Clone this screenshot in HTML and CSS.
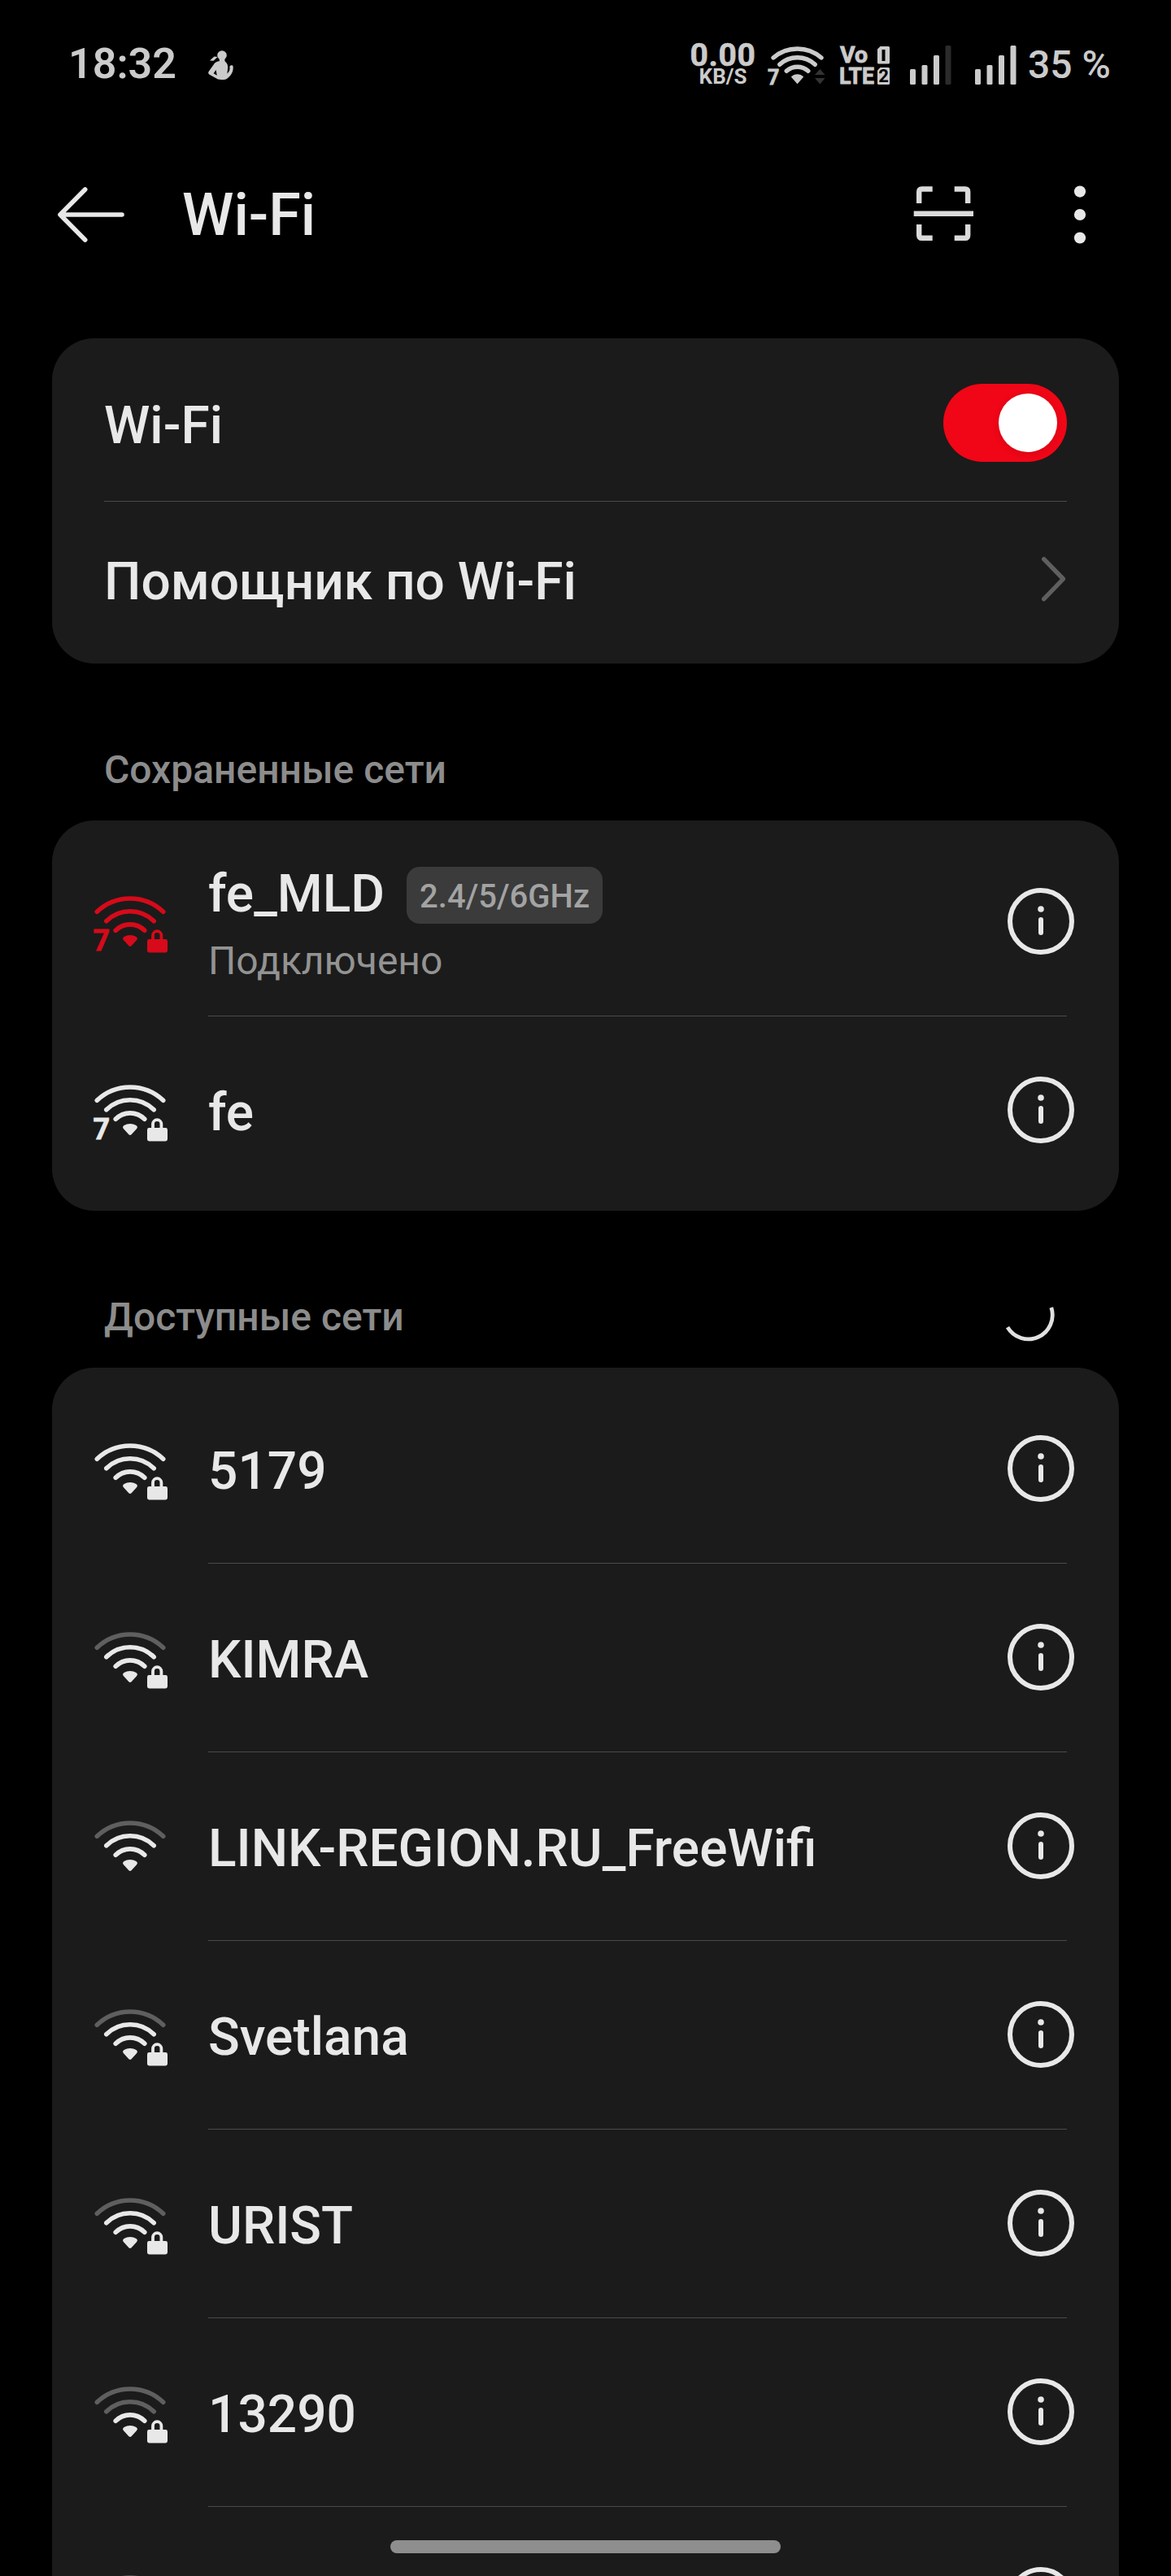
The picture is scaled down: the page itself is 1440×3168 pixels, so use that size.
FILE: index.html
```
<!DOCTYPE html>
<html lang="ru">
	<head>
		<meta charset="UTF-8">
		<title>Wi-Fi</title>
		<meta name="viewport" content="width=device-width, initial-scale=1">
		<link rel="stylesheet" href="styles.css">
	</head>
	<body>
		<svg class="sprite" xmlns="http://www.w3.org/2000/svg">
			<symbol id="wifi" viewBox="0 0 96 96">
				<g fill="none" stroke="currentColor" stroke-width="5.6" stroke-linecap="round">
					<path class="arc-3" d="M7.3 36.3A59 59 0 0 1 88.7 36.3"/>
					<path class="arc-2" d="M18.8 47.7A41.5 41.5 0 0 1 77.2 47.7"/>
					<path d="M30.2 59.3A25 25 0 0 1 65.8 59.3"/>
				</g>
				<path fill="currentColor" d="M40 71.2C38.6 69.8 38.8 68 40.6 67C45 64.2 51 64.2 55.4 67C57.2 68 57.4 69.8 56 71.2L49.6 78.2C48.6 79.2 47.4 79.2 46.4 78.2Z"/>
			</symbol>
			<symbol id="lock" viewBox="0 0 96 96">
				<rect x="69" y="70" width="25" height="16.4" rx="2.4" fill="currentColor"/>
				<path d="M76 71V65.4A5.2 5.2 0 0 1 86.4 65.4V71" fill="none" stroke="currentColor" stroke-width="3.8"/>
			</symbol>
			<symbol id="info" viewBox="0 0 96 96">
				<circle cx="48" cy="48" r="38" fill="none" stroke="currentColor" stroke-width="6"/>
				<circle cx="48" cy="33" r="3.8" fill="currentColor"/>
				<path d="M48 46V62" stroke="currentColor" stroke-width="6" stroke-linecap="round"/>
			</symbol>
		</svg>

		<main class="screen">
			<div class="status-bar">
				<span class="clock">18:32</span>
				<svg class="status-app" viewBox="0 0 32 36" width="32" height="36" fill="currentColor">
					<circle cx="17" cy="6" r="5.8"/>
					<path d="M13.8 10H20.4V14H13.8Z"/>
					<path d="M2 12.6L7.4 7.6L11.6 8L6.6 12.8Z"/>
					<path fill-rule="evenodd" d="M13.5 13.2H20.5C23.6 15.5 24.6 18.6 24 22.5L23.4 28.5C26.4 26 27 23.4 26.4 20.6C26 18 30 17.2 30.6 19.6C31.4 26 28 32 22 35.4C18.5 36.4 14.5 36.2 12 35.6L1.2 29.4C-.2 28.4 0 27 .8 25.8L7.6 16.2C9 14.4 11 13.4 13.5 13.2ZM9.6 24L6.6 28.2L10.8 30.8Z"/>
				</svg>
				<div class="status-icons">
					<div class="net-speed">
						<span class="net-value">0.00</span>
						<span class="net-unit">KB/S</span>
					</div>
					<svg class="status-wifi" viewBox="0 0 72 56" width="72" height="56">
						<g fill="none" stroke="currentColor" stroke-width="5.4" stroke-linecap="round">
							<path d="M8 23A45 45 0 0 1 67 23"/>
							<path d="M15.8 31.3A32 32 0 0 1 59.2 31.3"/>
							<path d="M24.2 39.3A20 20 0 0 1 50.8 39.3"/>
						</g>
						<path fill="currentColor" d="M29.8 46.6C34 42 41 42 45.2 46.6L37.5 55.2Z"/>
						<text class="wifi-gen" x="1" y="55.5">7</text>
						<path fill="#333" d="M59 44L65.3 37L71.6 44ZM59 48H71.6L65.3 55.6Z"/>
					</svg>
					<svg class="status-volte" viewBox="0 0 62 56" width="62" height="56">
						<text class="volte" x="0" y="29" textLength="34" lengthAdjust="spacingAndGlyphs">Vo</text>
						<text class="volte" x="-1" y="55" textLength="43" lengthAdjust="spacingAndGlyphs">LTE</text>
						<path fill="currentColor" fill-rule="evenodd" d="M49.5 9H59.5Q61 9 61 10.5V29Q61 30.5 59.5 30.5H47.5Q46 30.5 46 29V12.5ZM51.5 13V27H55.5V13Z"/>
						<path fill="currentColor" d="M49.5 35H59.5Q61 35 61 36.5V54.5Q61 56 59.5 56H47.5Q46 56 46 54.5V38.5Z"/>
						<text class="sim" x="53.5" y="53">2</text>
					</svg>
					<svg class="status-signal" viewBox="0 0 51 48" width="51" height="48" fill="currentColor">
						<rect x="0" y="29" width="7" height="19" rx="1.5"/>
						<rect x="14.5" y="24" width="7" height="24" rx="1.5"/>
						<rect x="29" y="12" width="7" height="36" rx="1.5"/>
						<rect x="43.5" y="0" width="7" height="48" rx="1.5" fill="#2b2b2b"/>
					</svg>
					<svg class="status-signal second" viewBox="0 0 51 48" width="51" height="48" fill="currentColor">
						<rect x="0" y="29" width="7" height="19" rx="1.5"/>
						<rect x="14.5" y="24" width="7" height="24" rx="1.5"/>
						<rect x="29" y="12" width="7" height="36" rx="1.5"/>
						<rect x="43.5" y="0" width="7" height="48" rx="1.5"/>
					</svg>
					<span class="battery">35 %</span>
				</div>
			</div>

			<header class="app-bar">
				<svg class="back" viewBox="0 0 96 96" width="96" height="96" fill="none" stroke="currentColor" stroke-width="5.6" stroke-linecap="round" stroke-linejoin="round">
					<path d="M86 48H10M40.7 17L10 48L40.7 79"/>
				</svg>
				<h1>Wi-Fi</h1>
				<svg class="scan" viewBox="0 0 96 96" width="96" height="96" fill="none" stroke="currentColor" stroke-width="6.4">
					<path d="M34.7 16.5H21.6Q18.2 16.5 18.2 20V34M61.7 16.5H74.8Q78.2 16.5 78.2 20V34M34.7 76.8H21.6Q18.2 76.8 18.2 73.2V60M61.7 76.8H74.8Q78.2 76.8 78.2 73.2V60M11.7 46.7H85"/>
				</svg>
				<svg class="more" viewBox="0 0 96 96" width="96" height="96" fill="currentColor">
					<circle cx="48" cy="19.6" r="7.1"/>
					<circle cx="48" cy="48" r="7.1"/>
					<circle cx="48" cy="76.5" r="7.1"/>
				</svg>
			</header>

			<section class="card">
				<div class="row setting">
					<span class="name">Wi-Fi</span>
					<span class="toggle"></span>
				</div>
				<div class="row setting">
					<span class="name">Помощник по Wi-Fi</span>
					<svg class="chevron" viewBox="0 0 32 56" width="32" height="56" fill="none" stroke="currentColor" stroke-width="5.4" stroke-linecap="round" stroke-linejoin="round">
						<path d="M3.7 3.7L27.5 28L3.7 52.7"/>
					</svg>
				</div>
			</section>

			<div class="section-head">
				<h2>Сохраненные сети</h2>
			</div>
			<section class="card">
				<div class="row network connected">
					<svg class="signal" width="96" height="96"><use href="#wifi"/><use href="#lock"/><text class="gen" x="2.5" y="84">7</text></svg>
					<div class="label">
						<div class="title-line">
							<span class="name">fe_MLD</span>
							<span class="badge">2.4/5/6GHz</span>
						</div>
						<span class="state">Подключено</span>
					</div>
					<svg class="info" width="96" height="96"><use href="#info"/></svg>
				</div>
				<div class="row network">
					<svg class="signal" width="96" height="96"><use href="#wifi"/><use href="#lock"/><text class="gen" x="2.5" y="84">7</text></svg>
					<span class="name">fe</span>
					<svg class="info" width="96" height="96"><use href="#info"/></svg>
				</div>
			</section>

			<div class="section-head">
				<h2>Доступные сети</h2>
				<svg class="spinner" viewBox="0 0 64 64" width="64" height="64" fill="none" stroke="currentColor" stroke-width="4.8">
					<path d="M60.8 23A29.7 29.7 0 0 1 7 47.3"/>
				</svg>
			</div>
			<section class="card">
				<div class="row network">
					<svg class="signal" width="96" height="96"><use href="#wifi"/><use href="#lock"/></svg>
					<span class="name">5179</span>
					<svg class="info" width="96" height="96"><use href="#info"/></svg>
				</div>
				<div class="row network">
					<svg class="signal level-2" width="96" height="96"><use href="#wifi"/><use href="#lock"/></svg>
					<span class="name">KIMRA</span>
					<svg class="info" width="96" height="96"><use href="#info"/></svg>
				</div>
				<div class="row network">
					<svg class="signal level-2" width="96" height="96"><use href="#wifi"/></svg>
					<span class="name">LINK-REGION.RU_FreeWifi</span>
					<svg class="info" width="96" height="96"><use href="#info"/></svg>
				</div>
				<div class="row network">
					<svg class="signal level-2" width="96" height="96"><use href="#wifi"/><use href="#lock"/></svg>
					<span class="name">Svetlana</span>
					<svg class="info" width="96" height="96"><use href="#info"/></svg>
				</div>
				<div class="row network">
					<svg class="signal level-2" width="96" height="96"><use href="#wifi"/><use href="#lock"/></svg>
					<span class="name">URIST</span>
					<svg class="info" width="96" height="96"><use href="#info"/></svg>
				</div>
				<div class="row network">
					<svg class="signal level-1" width="96" height="96"><use href="#wifi"/><use href="#lock"/></svg>
					<span class="name">13290</span>
					<svg class="info" width="96" height="96"><use href="#info"/></svg>
				</div>
				<div class="row network">
					<svg class="signal level-1" width="96" height="96"><use href="#wifi"/></svg>
					<span class="name"></span>
					<svg class="info" width="96" height="96"><use href="#info"/></svg>
				</div>
			</section>

			<div class="home-bar"></div>
		</main>
	</body>
</html>
```
FILE: styles.css
```
* {
	box-sizing: border-box;
}

html, body {
	margin: 0;
	padding: 0;
	background-color: #000;
	font-family: Roboto, "Noto Sans", sans-serif;
	font-weight: 500;
	color: #e8e8e8;
}

h1, h2 {
	margin: 0;
	font-weight: 500;
}

svg {
	display: block;
	flex: none;
	overflow: visible;
}

.sprite {
	position: absolute;
	width: 0;
	height: 0;
}

.screen {
	position: relative;
	width: 1440px;
	height: 3168px;
	overflow: hidden;
}

/* Status bar */

.status-bar {
	height: 160px;
	padding: 0 73px 0 84px;
	display: flex;
	align-items: flex-start;
	color: #cbcbcb;
}

.clock {
	width: 172px;
	margin-top: 49px;
	font-size: 52px;
	font-weight: 600;
	line-height: 60px;
}

.status-app {
	margin-top: 62px;
}

.status-icons {
	margin-left: auto;
	display: flex;
	align-items: flex-start;
}

.net-speed {
	width: 82px;
	margin: 51px 13px 0 0;
	display: flex;
	flex-direction: column;
	align-items: center;
	font-weight: 700;
	white-space: nowrap;
}

.net-value {
	font-size: 39px;
	line-height: 34px;
	letter-spacing: 0.6px;
	-webkit-text-stroke: 0.6px currentColor;
}

.net-unit {
	font-size: 26px;
	line-height: 18px;
}

.status-wifi {
	margin-top: 48px;
}

.status-volte {
	margin: 48px 24px 0 18px;
}

.wifi-gen {
	font-size: 25px;
	font-weight: 700;
	fill: currentColor;
	stroke: currentColor;
	stroke-width: 0.8px;
}

.volte {
	font-size: 27px;
	font-weight: 700;
	fill: currentColor;
	stroke: currentColor;
	stroke-width: 0.8px;
}

.sim {
	font-size: 22px;
	font-weight: 700;
	text-anchor: middle;
	fill: #000;
}

.status-signal {
	margin-top: 56px;
}

.second {
	margin-left: 29px;
}

.battery {
	width: 103px;
	margin: 52px 0 0 14px;
	font-size: 48px;
	line-height: 56px;
	white-space: nowrap;
}

/* Title */

.app-bar {
	height: 256px;
	padding: 56px 64px 0;
	display: flex;
	align-items: flex-start;
}

.app-bar h1 {
	margin: 7px 0 0 64px;
	font-size: 72px;
	line-height: 84px;
}

.scan {
	margin-left: auto;
	color: #dadada;
}

.more {
	margin-left: 72px;
}

/* Cards */

.card {
	margin: 0 64px;
	padding: 8px 0;
	border-radius: 52px;
	background-color: #1b1b1b;
}

.row {
	position: relative;
	display: flex;
	align-items: center;
}

.row + .row::before {
	content: "";
	position: absolute;
	top: 0;
	left: 64px;
	right: 64px;
	height: 1px;
	background-color: #4a4a4a;
}

.setting {
	height: 192px;
	padding: 0 64px;
	justify-content: space-between;
}

.network {
	height: 232px;
	padding: 0 48px;
}

.network + .network::before {
	left: 192px;
}

.name {
	padding-top: 8px;
	font-size: 64px;
	line-height: 76px;
}

.toggle {
	width: 152px;
	height: 96px;
	padding: 12px;
	border-radius: 48px;
	background-color: #f00617;
}

.toggle::after {
	content: "";
	display: block;
	width: 72px;
	height: 72px;
	margin-left: auto;
	border-radius: 50%;
	background-color: #fff;
	box-shadow: 0 2px 8px rgba(0,0,0,0.12);
}

.chevron {
	color: #5f5f5f;
}

.signal {
	margin-right: 48px;
}

.info {
	margin-left: auto;
}

.level-2 {
	--arc-3: #5f5f5f;
}

.level-1 {
	--arc-3: #5f5f5f;
	--arc-2: #5f5f5f;
}

.arc-3 {
	stroke: var(--arc-3, currentColor);
}

.arc-2 {
	stroke: var(--arc-2, currentColor);
}

.gen {
	font-size: 36px;
	font-weight: 700;
	fill: currentColor;
	stroke: currentColor;
	stroke-width: 0.8px;
}

.connected .signal {
	color: #d60a1a;
}

.label {
	padding-top: 4px;
	display: flex;
	flex-direction: column;
}

.title-line {
	display: flex;
	align-items: center;
}

.connected .name {
	padding: 0;
}

.badge {
	height: 70px;
	margin: 2px 0 0 27px;
	padding: 2px 16px 0;
	border-radius: 16px;
	background-color: #3b3b3b;
	color: #a3a3a3;
	font-size: 40px;
	line-height: 70px;
}

.state {
	margin-top: 17px;
	color: #939393;
	font-size: 48px;
	font-weight: 400;
	line-height: 54px;
}

/* Section headings */

.section-head {
	height: 193px;
	padding: 0 144px 34px 128px;
	display: flex;
	align-items: flex-end;
	justify-content: space-between;
	color: #8c8c8c;
}

.section-head h2 {
	font-size: 48px;
	line-height: 56px;
}

.spinner {
	margin-bottom: -1px;
	color: #e0e0e0;
}

.home-bar {
	position: absolute;
	left: 480px;
	bottom: 28px;
	width: 480px;
	height: 16px;
	border-radius: 8px;
	background-color: #8e8e8e;
}
```
